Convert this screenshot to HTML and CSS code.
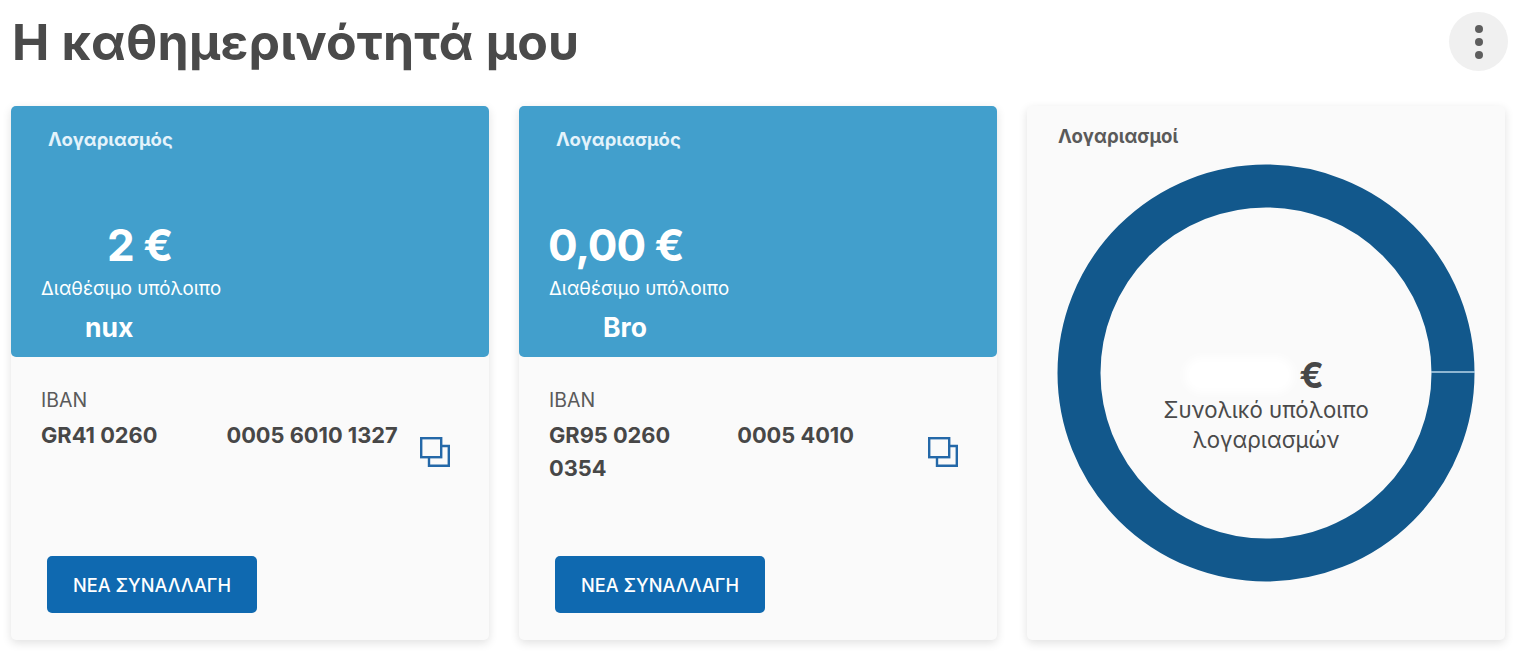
FILE: index.html
```html
<!DOCTYPE html>
<html lang="el">
<head>
<meta charset="utf-8">
<title>Η καθημερινότητά μου</title>
<link rel="stylesheet" href="styles.css">
</head>
<body>
<div class="page">
  <header class="top">
    <h1 class="title">Η καθημερινότητά μου</h1>
    <button class="more" aria-label="more"><span></span><span></span><span></span></button>
  </header>
  <main class="cards">
    <section class="card">
      <div class="hero">
        <div class="hero-label">Λογαριασμός</div>
        <div class="amount amount-a">2 €</div>
        <div class="avail">Διαθέσιμο υπόλοιπο</div>
        <div class="name name-a">nux</div>
      </div>
      <div class="body">
        <div class="iban-label">IBAN</div>
        <div class="iban-row">
          <div class="iban"><span>GR41 0260</span><span class="gap-a"></span><span>0005 6010 1327</span></div>
          <svg class="copy" viewBox="0 0 30 30" fill="none" stroke="#2468a8" stroke-width="2.4"><rect x="1.2" y="1.2" width="20" height="19"/><path d="M21 9h7.8v19.8H9v-8.6"/></svg>
        </div>
        <button class="action">ΝΕΑ ΣΥΝΑΛΛΑΓΗ</button>
      </div>
    </section>
    <section class="card">
      <div class="hero">
        <div class="hero-label">Λογαριασμός</div>
        <div class="amount">0,00 €</div>
        <div class="avail">Διαθέσιμο υπόλοιπο</div>
        <div class="name name-b">Bro</div>
      </div>
      <div class="body">
        <div class="iban-label">IBAN</div>
        <div class="iban-row">
          <div class="iban"><span>GR95 0260</span><span class="gap-b"></span><span>0005 4010</span> <span>0354</span></div>
          <svg class="copy" viewBox="0 0 30 30" fill="none" stroke="#2468a8" stroke-width="2.4"><rect x="1.2" y="1.2" width="20" height="19"/><path d="M21 9h7.8v19.8H9v-8.6"/></svg>
        </div>
        <button class="action">ΝΕΑ ΣΥΝΑΛΛΑΓΗ</button>
      </div>
    </section>
    <section class="card chart-card">
      <div class="chart-label">Λογαριασμοί</div>
      <div class="donut">
        <svg class="ring" viewBox="0 0 418 418" fill="none"><circle cx="209" cy="209" r="187" stroke="#12588c" stroke-width="43"/><path d="M374 208h44" stroke="#b9d6ea" stroke-width="1.5"/></svg>
        <div class="center">
          <div class="total"><span class="blur"></span>€</div>
          <div class="total-label">Συνολικό υπόλοιπο<br>λογαριασμών</div>
        </div>
      </div>
    </section>
  </main>
</div>
</body>
</html>
```
FILE: styles.css
```css
* { box-sizing: border-box; }
html, body { margin: 0; height: 100%; background: #fff; overflow: hidden; }
body { font-family: Inter, "Open Sans", sans-serif; color: #474747; }
.page { padding: 0 17px 0 11px; }
.top { display: flex; justify-content: space-between; align-items: center; height: 106px; padding-bottom: 23px; }
.title { margin: 0 0 0 1px; font-size: 50px; line-height: 60px; font-weight: 700; color: #4a4a4a; letter-spacing: .2px; }
.more { width: 59px; height: 59px; margin-right: -3px; border: 0; border-radius: 50%; background: #f0f0f0; display: flex; flex-direction: column; align-items: center; justify-content: center; gap: 5px; padding: 0; }
.more span { width: 8px; height: 8px; border-radius: 50%; background: #5e5e5e; }
.cards { display: grid; grid-template-columns: repeat(3, 478px); gap: 30px; }
.card { height: 534px; background: #fafafa; border-radius: 5px; box-shadow: 0 3px 10px rgba(0,0,0,.12); display: flex; flex-direction: column; }
.hero { height: 251px; background: #429fcc; border-radius: 5px; color: #fff; padding: 23px 0 0 30px; }
.hero-label { margin-left: 7px; font-size: 18.5px; line-height: 20px; font-weight: 700; color: #e4f3fb; }
.amount { margin-top: 71px; margin-left: -1px; font-size: 44px; line-height: 50px; font-weight: 700; letter-spacing: -1px; }
.amount-a { margin-left: 66px; }
.avail { margin-top: 7px; font-size: 18.7px; line-height: 24px; }
.name { margin-top: 11px; font-size: 26.5px; line-height: 30px; font-weight: 700; }
.name-a { margin-left: 44px; }
.name-b { margin-left: 54px; }
.body { flex: 1; padding: 32px 30px 0 30px; }
.iban-label { font-size: 19.5px; line-height: 22px; color: #5a5a5a; }
.iban-row { display: flex; justify-content: space-between; align-items: flex-start; margin-top: 8px; height: 137px; }
.iban { width: 360px; font-size: 21.8px; line-height: 33px; font-weight: 700; color: #474747; }
.gap-a { display: inline-block; width: 69px; }
.gap-b { display: inline-block; width: 67px; }
.copy { width: 30px; height: 30px; margin-top: 18px; margin-right: 9px; flex: none; }
.action { margin-left: 6px; width: 210px; height: 57px; background: #0f69b0; border: 0; border-radius: 5px; color: #fff; font-family: inherit; font-size: 18.2px; font-weight: 500; padding: 0; }
.chart-card { padding: 18px 0 0 30px; }
.chart-label { margin-left: 1px; font-size: 18.6px; line-height: 24px; font-weight: 700; color: #5a5a5a; }
.donut { position: relative; width: 418px; height: 418px; margin-top: 16px; }
.ring { display: block; width: 418px; height: 418px; }
.center { position: absolute; inset: 0; display: flex; flex-direction: column; align-items: center; padding-top: 190px; text-align: center; }
.total { margin-right: 24px; font-size: 36px; line-height: 42px; font-weight: 700; display: flex; align-items: center; }
.blur { width: 110px; height: 36px; margin-right: 5px; background: #fff; border-radius: 18px; filter: blur(5px); }
.total-label { margin-top: -1px; font-size: 22.2px; line-height: 30px; color: #4a4a4a; }
```
